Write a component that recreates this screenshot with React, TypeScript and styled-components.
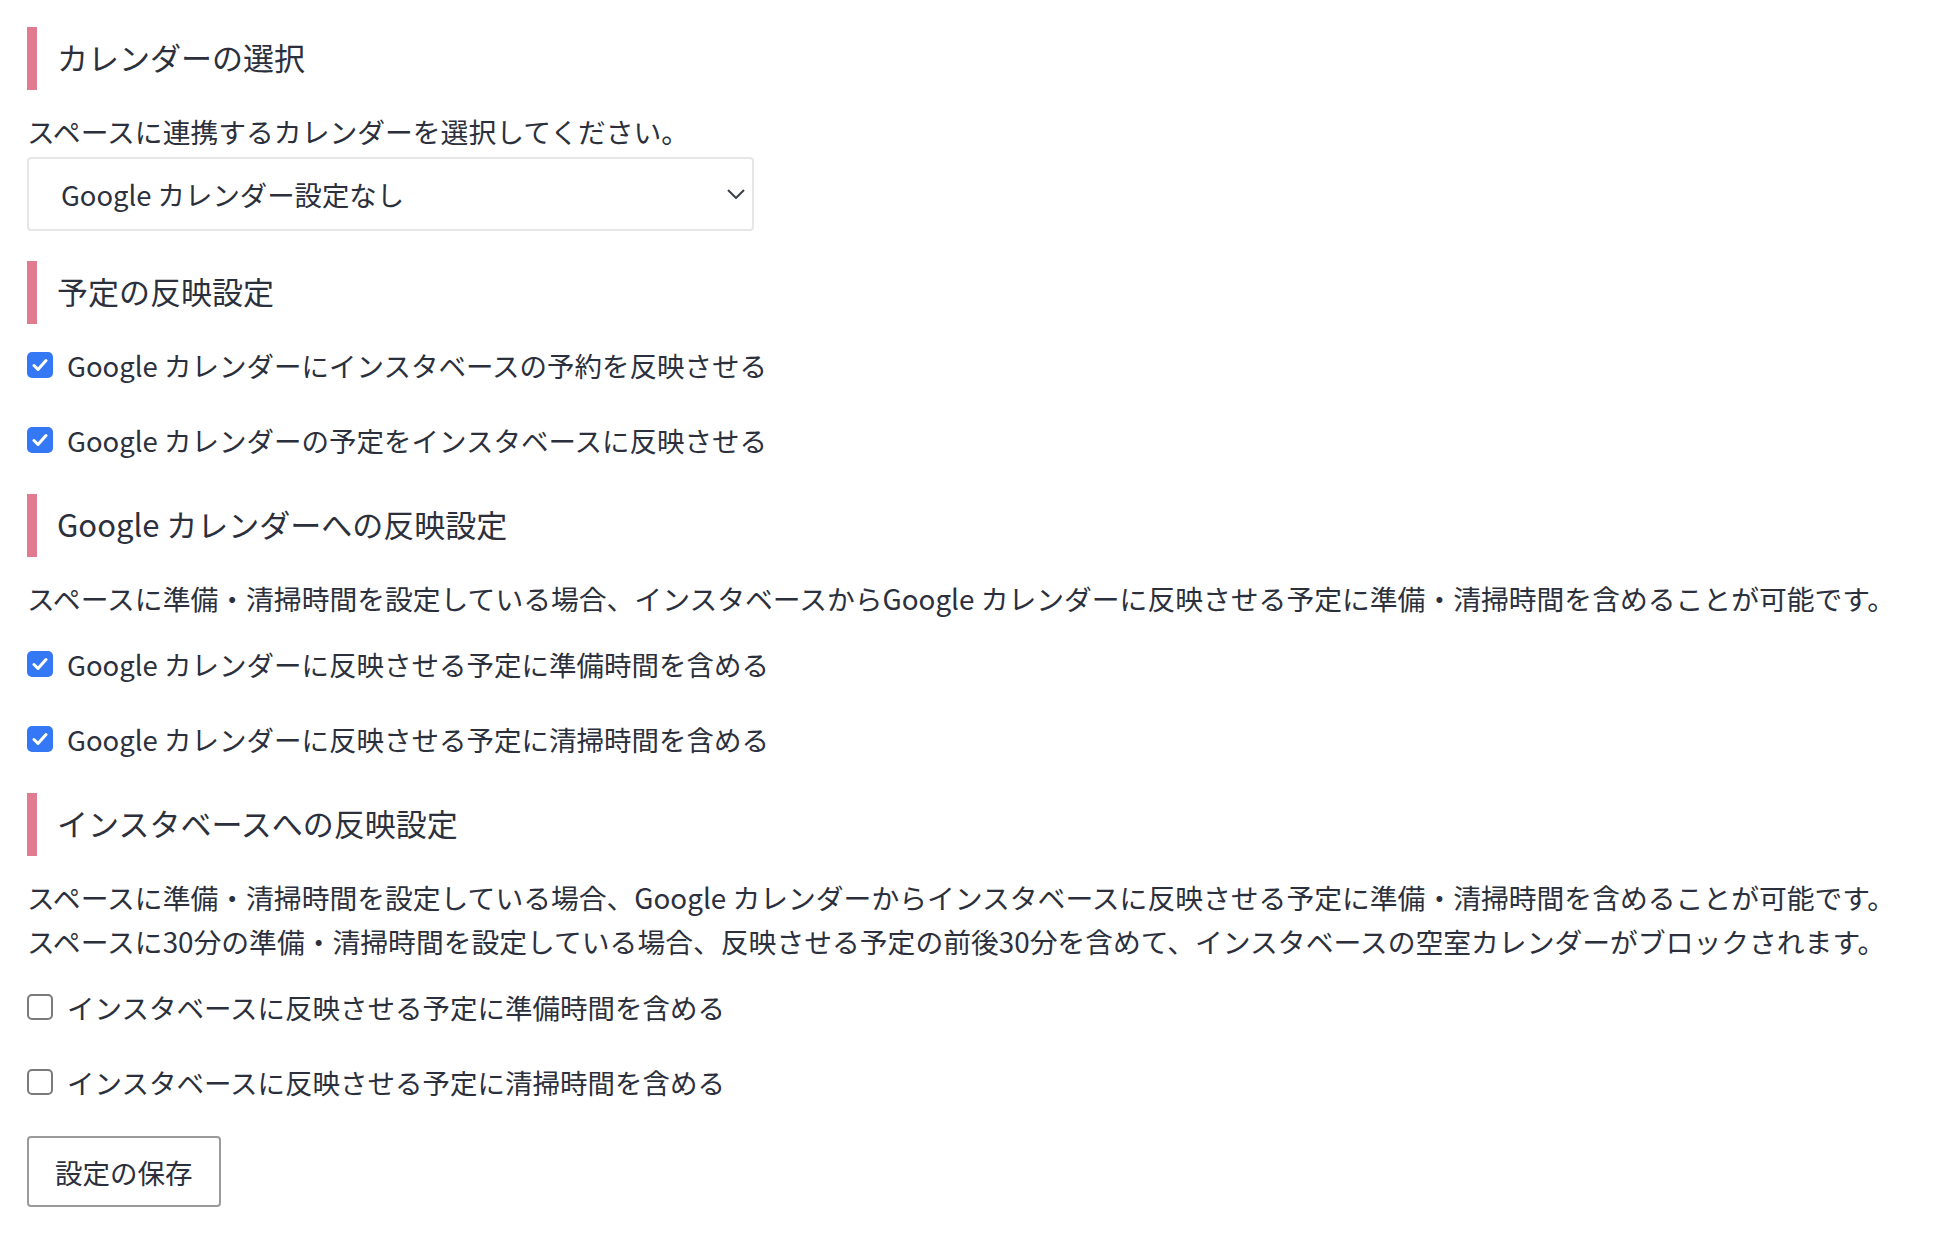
import React, { useState } from "react";
import styled, { createGlobalStyle } from "styled-components";

const GlobalStyle = createGlobalStyle`
  html, body {
    margin: 0;
    padding: 0;
    background: #ffffff;
  }
  body {
    font-family: "Noto Sans CJK JP", "Noto Sans", sans-serif;
    color: #2b303c;
  }
`;

const Page = styled.div`
  padding: 27px 27px 40px;
  display: flex;
  flex-direction: column;
`;

const Section = styled.section<{ $gapAfter?: number }>`
  display: flex;
  flex-direction: column;
  margin-bottom: ${(p) => p.$gapAfter ?? 33}px;
`;

const Heading = styled.h2`
  margin: 0 0 19px;
  height: 63px;
  box-sizing: border-box;
  display: flex;
  align-items: center;
  border-left: 10px solid #e17b90;
  padding: 0 0 4px 20px;
  font-size: 31px;
  font-weight: 400;
  line-height: 1;
`;

const Description = styled.p<{ $gapAfter?: number }>`
  margin: 0 0 ${(p) => p.$gapAfter ?? 0}px;
  font-size: 27.8px;
  line-height: 44px;
  white-space: nowrap;
`;

const SelectWrap = styled.div`
  position: relative;
  width: 727px;
  margin-top: 4px;
`;

const Select = styled.select`
  appearance: none;
  -webkit-appearance: none;
  width: 100%;
  height: 74px;
  border: 2px solid #e6e6e6;
  border-radius: 4px;
  background: #ffffff;
  padding: 0 60px 0 32px;
  font-family: inherit;
  font-size: 27.4px;
  color: #2b303c;
  outline: none;
`;

const Chevron = styled.svg`
  position: absolute;
  right: 9px;
  top: 50%;
  width: 18px;
  height: 10px;
  transform: translateY(-50%);
  pointer-events: none;
`;

const CheckList = styled.div`
  display: flex;
  flex-direction: column;
  gap: 32px;
`;

const CheckRow = styled.label`
  display: flex;
  align-items: center;
  gap: 14px;
  height: 43px;
  font-size: 27.5px;
  cursor: pointer;
  user-select: none;
`;

const HiddenInput = styled.input`
  position: absolute;
  opacity: 0;
  width: 0;
  height: 0;
`;

const Box = styled.span<{ $checked: boolean }>`
  flex: none;
  width: 26px;
  height: 26px;
  box-sizing: border-box;
  border-radius: 5px;
  display: flex;
  align-items: center;
  justify-content: center;
  background: ${(p) => (p.$checked ? "#3478f6" : "#ffffff")};
  border: ${(p) => (p.$checked ? "none" : "2px solid #7a7a7a")};
`;

const SaveButton = styled.button`
  align-self: flex-start;
  height: 71px;
  padding: 0 26px;
  border: 2px solid #9a9a9a;
  border-radius: 4px;
  background: #ffffff;
  font-family: inherit;
  font-size: 27.5px;
  color: #2b303c;
  cursor: pointer;
`;

const Checkbox = ({ label, initial }: { label: string; initial: boolean }) => {
  const [checked, setChecked] = useState(initial);
  return (
    <CheckRow>
      <HiddenInput type="checkbox" checked={checked} onChange={() => setChecked(!checked)} />
      <Box $checked={checked}>
        {checked && (
          <svg width="16" height="14" viewBox="0 0 16 14">
            <path d="M2 7.5 L6 11.5 L14 2.5" fill="none" stroke="#ffffff" strokeWidth="3" strokeLinecap="round" strokeLinejoin="round" />
          </svg>
        )}
      </Box>
      <span>{label}</span>
    </CheckRow>
  );
};

const App = () => {
  return (
    <>
      <GlobalStyle />
      <Page>
        <Section $gapAfter={30}>
          <Heading>カレンダーの選択</Heading>
          <Description>スペースに連携するカレンダーを選択してください。</Description>
          <SelectWrap>
            <Select defaultValue="none">
              <option value="none">Google カレンダー設定なし</option>
            </Select>
            <Chevron viewBox="0 0 18 10">
              <path d="M1 1 L9 9 L17 1" fill="none" stroke="#3a3f4b" strokeWidth="2" />
            </Chevron>
          </SelectWrap>
        </Section>

        <Section>
          <Heading>予定の反映設定</Heading>
          <CheckList>
            <Checkbox label="Google カレンダーにインスタベースの予約を反映させる" initial={true} />
            <Checkbox label="Google カレンダーの予定をインスタベースに反映させる" initial={true} />
          </CheckList>
        </Section>

        <Section>
          <Heading>Google カレンダーへの反映設定</Heading>
          <Description $gapAfter={22}>
            スペースに準備・清掃時間を設定している場合、インスタベースからGoogle カレンダーに反映させる予定に準備・清掃時間を含めることが可能です。
          </Description>
          <CheckList>
            <Checkbox label="Google カレンダーに反映させる予定に準備時間を含める" initial={true} />
            <Checkbox label="Google カレンダーに反映させる予定に清掃時間を含める" initial={true} />
          </CheckList>
        </Section>

        <Section>
          <Heading>インスタベースへの反映設定</Heading>
          <Description>
            スペースに準備・清掃時間を設定している場合、Google カレンダーからインスタベースに反映させる予定に準備・清掃時間を含めることが可能です。
          </Description>
          <Description $gapAfter={22}>
            スペースに30分の準備・清掃時間を設定している場合、反映させる予定の前後30分を含めて、インスタベースの空室カレンダーがブロックされます。
          </Description>
          <CheckList>
            <Checkbox label="インスタベースに反映させる予定に準備時間を含める" initial={false} />
            <Checkbox label="インスタベースに反映させる予定に清掃時間を含める" initial={false} />
          </CheckList>
        </Section>

        <SaveButton type="button">設定の保存</SaveButton>
      </Page>
    </>
  );
};

export default App;
